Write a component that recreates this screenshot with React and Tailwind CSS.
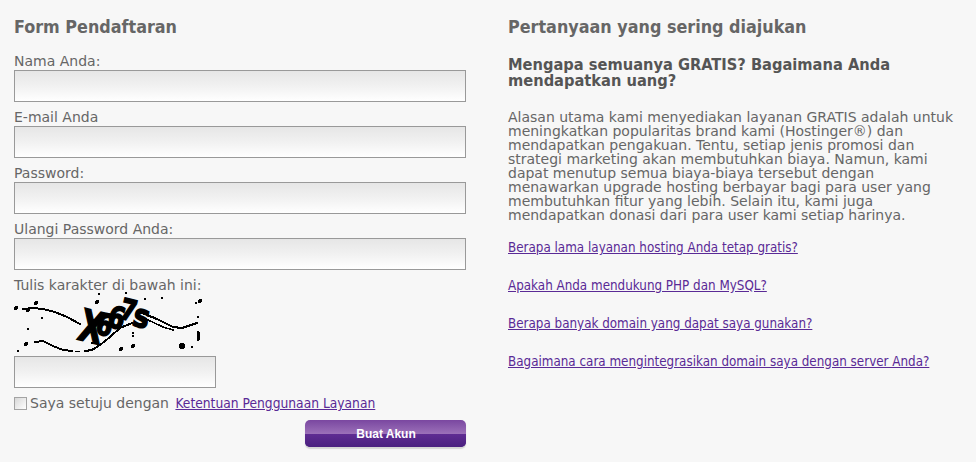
const labelCls = 'block text-[14px] leading-[14px] text-[#666]'
const inputCls =
  'block h-[32px] border border-[#999] bg-gradient-to-b from-[#e6e6e6] via-[#f1f1f1] to-white outline-none'
const condensed = "font-['DejaVu_Sans_Condensed','DejaVu_Sans',sans-serif]"

const questions = [
  'Berapa lama layanan hosting Anda tetap gratis?',
  'Apakah Anda mendukung PHP dan MySQL?',
  'Berapa banyak domain yang dapat saya gunakan?',
  'Bagaimana cara mengintegrasikan domain saya dengan server Anda?',
]

const specks = [
  [2, 16, 2],
  [22, 11, 2],
  [14, 18, 2],
  [28, 26, 1],
  [14, 37, 1],
  [12, 52, 2],
  [4, 59, 1],
  [85, 2, 1],
  [83, 10, 2],
  [112, 1, 1],
  [131, 7, 1],
  [148, 6, 1],
  [186, 9, 2],
  [182, 11, 1],
  [184, 25, 1],
  [119, 41, 1],
  [119, 44, 1],
  [119, 54, 2],
  [107, 57, 2],
  [168, 54, 3],
  [178, 55, 1],
  [78, 51, 1],
]

// captcha letters: char, x, baseline y, size, angle, x scale
const captchaChars = [
  ['X', 74, 50, 44, 14, 0.72],
  ['6', 88, 43, 30, 14, 0.8],
  ['6', 100, 36, 30, 14, 0.8],
  ['7', 112, 28, 29, 14, 0.8],
  ['s', 125, 35, 32, 14, 0.85],
]

const Field = ({ label }) => (
  <div className="h-[56px]">
    <label className={labelCls}>{label}</label>
    <input type="text" className={`${inputCls} mt-[2px] w-[452px]`} />
  </div>
)

const Captcha = () => (
  <svg width="190" height="64" viewBox="0 0 190 64" className="block" shapeRendering="crispEdges">
    <g fill="none" stroke="#000" strokeLinecap="round" strokeLinejoin="round">
      <path d="M9 17 L19 16 L29 17 L41 20 L53 25 L66 32" strokeWidth="2" />
      <path d="M21 50 L29 49 L39 54 L49 58 L58 59" strokeWidth="2" />
      <path d="M61 59 L66 59" strokeWidth="1" />
      <path d="M71 59 L78 58 L86 53 L96 45 L106 36 L118 31" strokeWidth="2" />
      <path d="M126 20 L143 27 L159 35 L168 36 L183 31" strokeWidth="2.2" />
      <path d="M132 27 L149 35 L159 38" strokeWidth="1.6" />
      <path d="M184 40 L184 48" strokeWidth="3" />
    </g>
    <g fill="#000">
      {captchaChars.map(([ch, x, y, size, angle, sx], i) => (
        <text
          key={i}
          textAnchor="middle"
          transform={`translate(${x} ${y}) rotate(${angle}) scale(${sx} 1)`}
          fontFamily="'DejaVu Sans', sans-serif"
          fontWeight="700"
          fontSize={size}
          stroke="#000"
          strokeWidth="1.6"
        >
          {ch}
        </text>
      ))}
      {specks.map(([cx, cy, r]) => (
        <circle key={`${cx}-${cy}`} cx={cx} cy={cy} r={r} />
      ))}
    </g>
  </svg>
)

const App = () => {
  return (
    <div className="flex h-[462px] w-[976px] overflow-hidden bg-[#f7f7f7] font-['DejaVu_Sans','Verdana',sans-serif] text-[#666]">
      {/* Left: signup form */}
      <div className="w-[508px] shrink-0 pl-[14px] pt-[17px]">
        <h2 className={`mb-[17px] text-[17.8px] font-bold leading-[20px] text-[#666] ${condensed}`}>Form Pendaftaran</h2>
        <Field label="Nama Anda:" />
        <Field label="E-mail Anda" />
        <Field label="Password:" />
        <Field label="Ulangi Password Anda:" />
        <label className={`${labelCls} relative z-10`}>Tulis karakter di bawah ini:</label>
        <Captcha />
        <input type="text" className={`${inputCls} w-[202px]`} />
        <div className="mt-[8px] flex items-center gap-[3px]">
          <input
            type="checkbox"
            className="h-[13px] w-[13px] appearance-none border border-[#a3a3a3] bg-gradient-to-br from-[#d8d8d8] to-white"
          />
          <span className="text-[14px] leading-[14px]">
            Saya setuju dengan{' '}
            <a href="#" className={`ml-[2px] text-[13.7px] text-[#5a2a96] underline ${condensed}`}>
              Ketentuan Penggunaan Layanan
            </a>
          </span>
        </div>
        <div className="mt-[10px] flex w-[452px] justify-end">
          <button
            type="button"
            className="relative h-[27px] w-[161px] overflow-hidden rounded-[5px] bg-gradient-to-b from-[#7a47a0] from-0% via-[#9b6fb8] via-50% to-[#4b2080] pl-[1px] text-[12px] font-bold text-white shadow-[0_2px_1px_#d4d4d4] font-['Liberation_Sans',Arial,sans-serif]"
          >
            <span className="absolute inset-x-0 bottom-0 h-[13px] bg-gradient-to-b from-[#5f2c92] to-[#4b2080]" />
            <span className="relative">Buat Akun</span>
          </button>
        </div>
      </div>

      {/* Right: FAQ */}
      <div className="w-[448px] pt-[17px]">
        <h2 className={`text-[17.8px] font-bold leading-[20px] text-[#666] ${condensed}`}>
          Pertanyaan yang sering diajukan
        </h2>
        <h3 className={`mt-[20px] text-[16.3px] font-bold leading-[16px] text-[#555] ${condensed}`}>
          Mengapa semuanya GRATIS? Bagaimana Anda mendapatkan uang?
        </h3>
        <p className="mt-[21px] text-[14px] leading-[14px]">
          Alasan utama kami menyediakan layanan GRATIS adalah untuk meningkatkan popularitas brand kami (Hostinger®)
          dan mendapatkan pengakuan. Tentu, setiap jenis promosi dan strategi marketing akan membutuhkan biaya. Namun,
          kami dapat menutup semua biaya-biaya tersebut dengan menawarkan upgrade hosting berbayar bagi para user yang
          membutuhkan fitur yang lebih. Selain itu, kami juga mendapatkan donasi dari para user kami setiap harinya.
        </p>
        <div className={`mt-[19px] flex flex-col gap-[24px] ${condensed}`}>
          {questions.map((q) => (
            <a key={q} href="#" className="text-[13.3px] leading-[14px] text-[#5a2a96] underline">
              {q}
            </a>
          ))}
        </div>
      </div>
    </div>
  )
}

export default App
